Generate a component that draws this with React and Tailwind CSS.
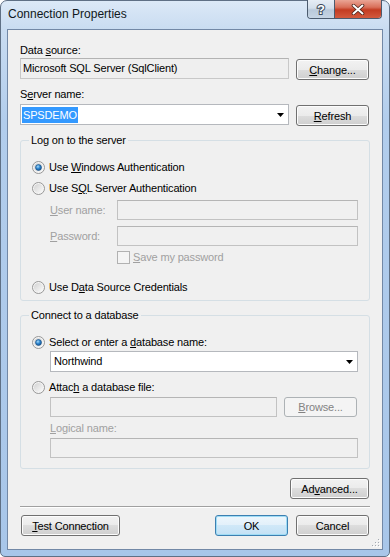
import React from "react";

const btnLook = {
  normal:
    "border-[#707070] bg-[linear-gradient(to_bottom,#f2f2f2_0%,#ebebeb_50%,#dddddd_50%,#cfcfcf_100%)] shadow-[inset_0_0_0_1px_#fcfcfc] text-black",
  default:
    "border-[#3c7fb1] bg-[linear-gradient(to_bottom,#edf6fc_0%,#e2f0fa_50%,#d0e8f8_50%,#c3e1f5_100%)] shadow-[inset_0_0_0_1px_#9fdcf5] text-black",
  disabled: "border-[#adb2b5] bg-[#f4f4f4] text-[#838383]",
};

// Win7 push button
const Button = ({ kind = "normal", className = "", children }) => (
  <div
    className={`flex h-[21px] shrink-0 items-center justify-center rounded-[3px] border pt-[1px] ${btnLook[kind]} ${className}`}
  >
    {children}
  </div>
);

const boxLook = {
  white: "border-[#b5b8bd] bg-white",
  readonly: "border-[#c8c8c8] border-t-[#b3b3b3] bg-[#efefef]",
  disabled: "border-[#c2c2c2] border-t-[#b5b5b5] bg-[#f0f0f0]",
};

const TextBox = ({ kind = "disabled", className = "", children }) => (
  <div className={`flex shrink-0 items-center border ${boxLook[kind]} ${className}`}>{children}</div>
);

const Arrow = () => (
  <svg width="7" height="4" viewBox="0 0 7 4" className="shrink-0">
    <path d="M0 0H7L3.5 4Z" fill="#000" />
  </svg>
);

const Radio = ({ checked }) => (
  <svg width="13" height="13" viewBox="0 0 13 13" className="shrink-0">
    <defs>
      <linearGradient id="radioFace" x1="0" y1="0" x2="1" y2="1">
        <stop offset="0" stopColor="#d2d2d2" />
        <stop offset="1" stopColor="#fbfbfb" />
      </linearGradient>
      <radialGradient id="radioDot" cx="0.4" cy="0.35" r="0.75">
        <stop offset="0" stopColor="#a6dcfb" />
        <stop offset="0.45" stopColor="#2f86cf" />
        <stop offset="1" stopColor="#0c4685" />
      </radialGradient>
    </defs>
    <circle cx="6.5" cy="6.5" r="6" fill="#f5f5f5" stroke="#979797" />
    <circle cx="6.5" cy="6.5" r="4.6" fill="url(#radioFace)" />
    {checked && <circle cx="6.5" cy="6.5" r="3" fill="url(#radioDot)" stroke="#1b4f80" strokeWidth="0.6" />}
  </svg>
);

const RadioRow = ({ checked, children }) => (
  <div className="flex h-[15px] items-center gap-[4px]">
    <Radio checked={checked} />
    <span>{children}</span>
  </div>
);

// group box with the caption laid over its top border
const Group = ({ title, className = "", children }) => (
  <div className={`w-[350px] rounded-[3px] border border-[#d5dfe5] pl-[11px] ${className}`}>
    <div className="-mt-[8px] ml-[-3px] flex h-[15px] items-center">
      <span className="bg-[#f0f0f0] px-[2px]">{title}</span>
    </div>
    {children}
  </div>
);

const Grip = () => (
  <svg width="11" height="11" viewBox="0 0 11 11" className="absolute bottom-[1px] right-[1px]">
    {[
      [8, 8],
      [5, 8],
      [2, 8],
      [8, 5],
      [5, 5],
      [8, 2],
    ].map(([x, y]) => (
      <g key={`${x}-${y}`}>
        <rect x={x + 1} y={y + 1} width="1" height="1" fill="#ffffff" />
        <rect x={x} y={y} width="1" height="1" fill="#a3a9b1" />
      </g>
    ))}
  </svg>
);

export default function App() {
  return (
    <div className="h-[557px] w-[390px] rounded-t-[7px] rounded-b-[5px] border border-[#5f7085] bg-[linear-gradient(to_bottom,#dce9f7_0px,#c9dcf1_28px,#b2cdec_120px,#a8c6e9_100%)] px-[6px] pb-[6px] font-['Liberation_Sans',Arial,sans-serif] text-black">
      {/* title bar */}
      <div className="flex h-[28px] items-start justify-between">
        <span className="mt-[6px] pl-[1px] text-[12px] leading-[15px] text-[#101820]">Connection Properties</span>
        <div className="-mt-[1px] mr-[1px] flex h-[19px] overflow-hidden rounded-b-[4px] border border-t-0 border-[#4b5b6e]">
          <div className="flex w-[27px] items-center justify-center border-r border-[#4b5b6e] bg-[linear-gradient(to_bottom,#e6edf5_0%,#d3dfeb_45%,#b9c9da_55%,#c6d5e4_100%)]">
            <svg width="12" height="14" viewBox="0 0 12 14">
              <text
                x="6"
                y="12"
                textAnchor="middle"
                fontFamily="Liberation Sans, Arial, sans-serif"
                fontWeight="bold"
                fontSize="13"
                fill="#ffffff"
                stroke="#3c4b5c"
                strokeWidth="2"
                paintOrder="stroke"
              >
                ?
              </text>
            </svg>
          </div>
          <div className="flex w-[46px] items-center justify-center bg-[linear-gradient(to_bottom,#eaa595_0%,#d9705a_40%,#c33c22_55%,#d35a3e_100%)]">
            <svg width="14" height="11" viewBox="0 0 14 11">
              <path d="M2.5 1.5L11.5 9.5M11.5 1.5L2.5 9.5" stroke="#4a2219" strokeWidth="3.6" strokeLinecap="round" />
              <path d="M2.5 1.5L11.5 9.5M11.5 1.5L2.5 9.5" stroke="#ffffff" strokeWidth="2" strokeLinecap="round" />
            </svg>
          </div>
        </div>
      </div>

      {/* client area */}
      <div className="relative h-[521px] w-[376px] border border-[#7288a6] bg-[#f0f0f0] pl-[12px] pr-[13px] pt-[13px] text-[11px] leading-[15px] tracking-[-0.15px]">
        <div className="h-[15px]">
          Data <u className="underline-offset-[1px]">s</u>ource:
        </div>
        <div className="flex h-[22px] items-start justify-between">
          <TextBox kind="readonly" className="h-[21px] w-[269px] pl-[2px]">
            Microsoft SQL Server (SqlClient)
          </TextBox>
          <Button className="mt-[1px] w-[73px]">
            <span>
              <u className="underline-offset-[1px]">C</u>hange...
            </span>
          </Button>
        </div>

        <div className="mt-[7px] h-[15px]">
          S<u className="underline-offset-[1px]">e</u>rver name:
        </div>
        <div className="mt-[2px] flex h-[22px] items-start justify-between">
          <TextBox kind="white" className="h-[21px] w-[269px] justify-between pl-[1px] pr-[4px]">
            <span className="bg-[#3399ff] px-[1px] leading-[16px] text-white">SPSDEMO</span>
            <Arrow />
          </TextBox>
          <Button className="mt-[1px] w-[73px]">
            <span>
              <u className="underline-offset-[1px]">R</u>efresh
            </span>
          </Button>
        </div>

        {/* log on group */}
        <Group title="Log on to the server" className="mt-[14px] pb-[5px]">
          <div className="mt-[12px]">
            <RadioRow checked>
              Use <u className="underline-offset-[1px]">W</u>indows Authentication
            </RadioRow>
          </div>
          <div className="mt-[6px]">
            <RadioRow>
              Use S<u className="underline-offset-[1px]">Q</u>L Server Authentication
            </RadioRow>
          </div>
          <div className="mt-[4px] flex h-[20px] items-center pl-[18px] text-[#a0a0a0]">
            <span className="w-[67px]">
              <u className="underline-offset-[1px]">U</u>ser name:
            </span>
            <TextBox className="h-[20px] w-[241px]" />
          </div>
          <div className="mt-[6px] flex h-[20px] items-center pl-[18px] text-[#a0a0a0]">
            <span className="w-[67px]">
              <u className="underline-offset-[1px]">P</u>assword:
            </span>
            <TextBox className="h-[20px] w-[241px]" />
          </div>
          <div className="mt-[4px] flex h-[15px] items-center gap-[3px] pl-[85px] text-[#a0a0a0]">
            <div className="h-[13px] w-[13px] shrink-0 border border-[#b1b1b1] bg-[#f4f4f4]" />
            <span>
              <u className="underline-offset-[1px]">S</u>ave my password
            </span>
          </div>
          <div className="mt-[15px]">
            <RadioRow>
              Use D<u className="underline-offset-[1px]">a</u>ta Source Credentials
            </RadioRow>
          </div>
        </Group>

        {/* database group */}
        <Group title="Connect to a database" className="mt-[14px] pb-[10px]">
          <div className="mt-[12px]">
            <RadioRow checked>
              Select or enter a <u className="underline-offset-[1px]">d</u>atabase name:
            </RadioRow>
          </div>
          <div className="mt-[1px] pl-[18px]">
            <TextBox kind="white" className="h-[21px] w-[308px] justify-between pl-[3px] pr-[4px]">
              <span>Northwind</span>
              <Arrow />
            </TextBox>
          </div>
          <div className="mt-[8px]">
            <RadioRow>
              Attac<u className="underline-offset-[1px]">h</u> a database file:
            </RadioRow>
          </div>
          <div className="mt-[2px] flex gap-[7px] pl-[18px]">
            <TextBox className="h-[20px] w-[227px]" />
            <Button kind="disabled" className="!h-[20px] w-[73px]">
              <span>
                <u className="underline-offset-[1px]">B</u>rowse...
              </span>
            </Button>
          </div>
          <div className="mt-[4px] h-[15px] pl-[18px] text-[#a0a0a0]">
            <u className="underline-offset-[1px]">L</u>ogical name:
          </div>
          <div className="mt-[2px] pl-[18px]">
            <TextBox className="h-[20px] w-[308px]" />
          </div>
        </Group>

        <div className="mt-[9px] flex justify-end">
          <Button className="w-[79px]">
            <span>
              Ad<u className="underline-offset-[1px]">v</u>anced...
            </span>
          </Button>
        </div>

        <div className="mt-[7px] h-[2px] w-[350px] border-t border-b border-t-[#a0a0a0] border-b-white" />

        <div className="mt-[7px] flex items-start">
          <Button className="ml-[1px] w-[99px]">
            <span>
              <u className="underline-offset-[1px]">T</u>est Connection
            </span>
          </Button>
          <div className="ml-auto flex gap-[8px]">
            <Button kind="default" className="w-[73px]">
              OK
            </Button>
            <Button className="w-[73px]">Cancel</Button>
          </div>
        </div>

        <Grip />
      </div>
    </div>
  );
}
